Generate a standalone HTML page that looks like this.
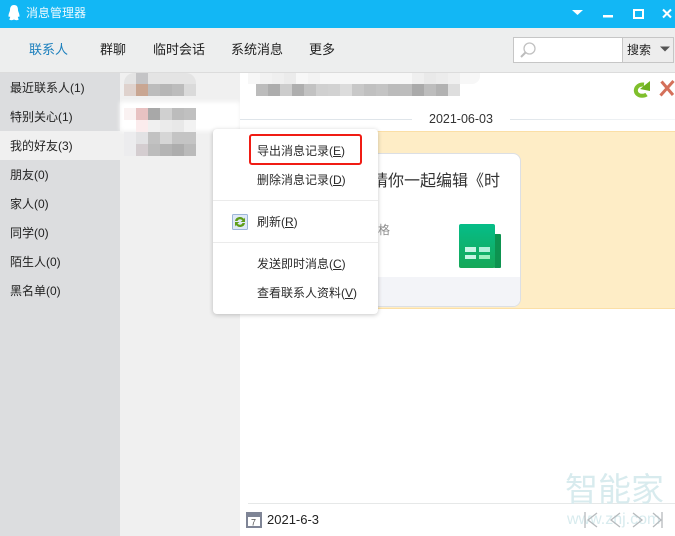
<!DOCTYPE html>
<html lang="zh">
<head>
<meta charset="utf-8">
<style>
html,body{margin:0;padding:0;}
body{width:675px;height:536px;overflow:hidden;position:relative;background:#fff;font-family:"Liberation Sans","Noto Sans CJK SC",sans-serif;font-size:13px;color:#222;}
.a{position:absolute;}
.t{position:absolute;white-space:nowrap;line-height:18px;}
.m{position:absolute;width:12px;height:12px;}
.side{position:absolute;left:10px;white-space:nowrap;line-height:18px;font-size:12px;color:#222;}
.menu{position:absolute;left:257px;white-space:nowrap;line-height:18px;font-size:12px;color:#2a2a2a;}
.menu u{text-underline-offset:1px;}
</style>
</head>
<body>
<!-- title bar -->
<div class="a" style="left:0;top:0;width:675px;height:28px;background:#12b7f5;"></div>
<svg class="a" style="left:7px;top:4px" width="14" height="18" viewBox="0 0 14 18">
<path d="M7 1C4 1 3 3.500 3 6C3 7.500 1.500 9.500 1.500 12C1.500 13 2.200 13.200 3 12.500C3.500 14 2 15 2.500 15.800C3.500 16.500 6 16.200 7 15.500C8 16.200 10.500 16.500 11.500 15.800C12 15 10.500 14 11 12.500C11.800 13.200 12.500 13 12.500 12C12.500 9.500 11 7.500 11 6C11 3 10 1 7 1Z" fill="#fff"/>
</svg>
<div class="t" style="left:26px;top:3px;color:#fff;font-size:12px;line-height:20px;opacity:.92">消息管理器</div>
<svg class="a" style="left:570px;top:7px" width="105" height="14" viewBox="0 0 105 14">
<path d="M2 3H13L7.500 8Z" fill="#fff"/>
<rect x="33" y="8" width="10" height="2.500" fill="#fff"/>
<rect x="64" y="3" width="9" height="8" fill="none" stroke="#fff" stroke-width="2"/>
<path d="M93 2.500L101 10.500M101 2.500L93 10.500" stroke="#fff" stroke-width="2" fill="none"/>
</svg>
<!-- toolbar -->
<div class="a" style="left:0;top:28px;width:675px;height:44px;background:#edeeee;border-bottom:1px solid #dcdcdc;box-sizing:content-box;"></div>
<div class="t" style="left:29px;top:41px;color:#1b7fbd;font-size:13px;">联系人</div>
<div class="t" style="left:100px;top:41px;font-size:13px;">群聊</div>
<div class="t" style="left:153px;top:41px;font-size:13px;">临时会话</div>
<div class="t" style="left:231px;top:41px;font-size:13px;">系统消息</div>
<div class="t" style="left:309px;top:41px;font-size:13px;">更多</div>
<!-- search -->
<div class="a" style="left:513px;top:37px;width:159px;height:24px;border:1px solid #c6c6c6;box-sizing:content-box;background:#fff;"></div>
<div class="a" style="left:622px;top:38px;width:50px;height:24px;background:#ededed;border-left:1px solid #c6c6c6;"></div>
<svg class="a" style="left:519px;top:41px" width="18" height="18" viewBox="0 0 18 18">
<circle cx="10.500" cy="7.500" r="5.500" fill="none" stroke="#c2c2c2" stroke-width="1.300"/>
<path d="M6.500 11.500L2 16" stroke="#bcbcbc" stroke-width="2" fill="none"/>
</svg>
<div class="t" style="left:627px;top:41px;font-size:12px;color:#222;">搜索</div>
<svg class="a" style="left:659px;top:45px" width="12" height="8" viewBox="0 0 12 8"><path d="M1 1.500H11L6 6.500Z" fill="#555"/></svg>
<!-- left sidebar -->
<div class="a" style="left:0;top:73px;width:120px;height:463px;background:#dcdddf;"></div>
<div class="a" style="left:0;top:131px;width:120px;height:29px;background:#f0f0f0;"></div>
<div class="side" style="top:79px;">最近联系人(1)</div>
<div class="side" style="top:108px;">特别关心(1)</div>
<div class="side" style="top:137px;">我的好友(3)</div>
<div class="side" style="top:166px;">朋友(0)</div>
<div class="side" style="top:195px;">家人(0)</div>
<div class="side" style="top:224px;">同学(0)</div>
<div class="side" style="top:253px;">陌生人(0)</div>
<div class="side" style="top:282px;">黑名单(0)</div>
<!-- second column -->
<div class="a" style="left:120px;top:73px;width:120px;height:463px;background:#f0f0f0;"></div>
<div class="a" style="left:120px;top:102px;width:120px;height:29px;background:#fff;filter:blur(2px);"></div>
<!-- mosaic list -->
<div class="a" style="left:124px;top:73px;width:72px;height:23px;background:#e4e4e4;border-radius:10px;"></div>
<div class="m" style="left:136px;top:73px;height:11px;background:#c4c4c6"></div>
<div class="m" style="left:124px;top:84px;background:#dfd2cd"></div>
<div class="m" style="left:136px;top:84px;background:#c9a692"></div>
<div class="m" style="left:148px;top:84px;background:#bcbcbc"></div>
<div class="m" style="left:160px;top:84px;background:#b6b6b6"></div>
<div class="m" style="left:172px;top:84px;background:#bcbcbc"></div>
<div class="m" style="left:184px;top:84px;background:#dadada"></div>
<div class="m" style="left:124px;top:108px;background:#faf2f2"></div>
<div class="m" style="left:136px;top:108px;background:#e8c2c2"></div>
<div class="m" style="left:148px;top:108px;background:#a8a8a8"></div>
<div class="m" style="left:160px;top:108px;background:#d0d0d0"></div>
<div class="m" style="left:172px;top:108px;background:#bcbcbc"></div>
<div class="m" style="left:184px;top:108px;background:#c0c0c0"></div>
<div class="m" style="left:136px;top:120px;background:#fbeced"></div>
<div class="m" style="left:148px;top:120px;background:#f0f0f0"></div>
<div class="m" style="left:160px;top:120px;background:#ebebeb"></div>
<div class="m" style="left:172px;top:120px;background:#e8e8e8"></div>
<div class="m" style="left:184px;top:120px;background:#f2f2f2"></div>
<div class="m" style="left:124px;top:132px;background:#ececee"></div>
<div class="m" style="left:136px;top:132px;background:#e2e2e4"></div>
<div class="m" style="left:148px;top:132px;background:#c2c2c2"></div>
<div class="m" style="left:160px;top:132px;background:#d6d6d6"></div>
<div class="m" style="left:172px;top:132px;background:#c4c4c4"></div>
<div class="m" style="left:184px;top:132px;background:#c4c4c4"></div>
<div class="m" style="left:124px;top:144px;background:#ececee"></div>
<div class="m" style="left:136px;top:144px;background:#d4cdd0"></div>
<div class="m" style="left:148px;top:144px;background:#bcbcbc"></div>
<div class="m" style="left:160px;top:144px;background:#b4b4b4"></div>
<div class="m" style="left:172px;top:144px;background:#adadad"></div>
<div class="m" style="left:184px;top:144px;background:#bababa"></div>
<!-- header mosaic -->
<div class="a" style="left:248px;top:73px;width:232px;height:11px;background:#f7f7f7;border-radius:0 0 8px 0;"></div>
<div class="m" style="left:260px;top:73px;height:11px;background:#f2f2f2"></div>
<div class="m" style="left:272px;top:73px;height:11px;background:#efefef"></div>
<div class="m" style="left:284px;top:73px;height:11px;background:#ebebeb"></div>
<div class="m" style="left:308px;top:73px;height:11px;background:#f3f3f3"></div>
<div class="m" style="left:412px;top:73px;height:11px;background:#efefef"></div>
<div class="m" style="left:424px;top:73px;height:11px;background:#e9e9e9"></div>
<div class="m" style="left:436px;top:73px;height:11px;background:#ececec"></div>
<div class="m" style="left:448px;top:73px;height:11px;background:#f0f0f0"></div>
<div class="m" style="left:256px;top:84px;background:#bcbcbc"></div>
<div class="m" style="left:268px;top:84px;background:#adadad"></div>
<div class="m" style="left:280px;top:84px;background:#cccccc"></div>
<div class="m" style="left:292px;top:84px;background:#aeaeae"></div>
<div class="m" style="left:304px;top:84px;background:#c2c2c2"></div>
<div class="m" style="left:316px;top:84px;background:#d0d0d0"></div>
<div class="m" style="left:328px;top:84px;background:#d2d2d2"></div>
<div class="m" style="left:340px;top:84px;background:#dcdcdc"></div>
<div class="m" style="left:352px;top:84px;background:#c8c8c8"></div>
<div class="m" style="left:364px;top:84px;background:#c0c0c0"></div>
<div class="m" style="left:376px;top:84px;background:#c4c4c4"></div>
<div class="m" style="left:388px;top:84px;background:#bbbbbb"></div>
<div class="m" style="left:400px;top:84px;background:#bdbdbd"></div>
<div class="m" style="left:412px;top:84px;background:#aaaaaa"></div>
<div class="m" style="left:424px;top:84px;background:#bdbdbd"></div>
<div class="m" style="left:436px;top:84px;background:#b2b2b2"></div>
<div class="m" style="left:448px;top:84px;background:#dedede"></div>
<!-- header icons -->
<svg class="a" style="left:633px;top:80px" width="18" height="18" viewBox="0 0 18 18">
<path d="M11 4.500C6 4 3 7 2.800 10.500C3 14 6 15.800 9 15.800C11 15.800 12.500 15.200 13.500 14.500" fill="none" stroke="#7fbf2c" stroke-width="4"/>
<path d="M17 1V11L7 9Z" fill="#6fb020"/>
</svg>
<svg class="a" style="left:659px;top:80px" width="16" height="17" viewBox="0 0 16 17">
<path d="M2.500 1.500L14 15M14.500 1L1.500 15.500" stroke="#d4705a" stroke-width="3" fill="none"/>
</svg>
<!-- date row -->
<div class="a" style="left:240px;top:119px;width:172px;height:1px;background:#dfe5ea"></div>
<div class="t" style="left:429px;top:110px;font-size:12.500px;color:#333;">2021-06-03</div>
<div class="a" style="left:510px;top:119px;width:165px;height:1px;background:linear-gradient(90deg,#dfe5ea,#f4f6f8);"></div>
<!-- yellow band -->
<div class="a" style="left:240px;top:131px;width:435px;height:178px;background:#feedc6;border-top:1px solid #fbdfa6;border-bottom:1px solid #fbdfa6;box-sizing:border-box;"></div>
<!-- card -->
<div class="a" style="left:300px;top:153px;width:221px;height:154px;background:#fff;border:1px solid #dcdfe4;border-radius:8px;box-sizing:border-box;overflow:hidden;">
  <div class="a" style="left:0;bottom:0;width:100%;height:29px;background:#f3f4f8;"></div>
</div>
<div class="t" style="left:372px;top:171px;font-size:16px;line-height:22px;color:#333;">请你一起编辑《时</div>
<div class="t" style="left:378px;top:221px;font-size:12px;color:#8d8d8d;">格</div>
<svg class="a" style="left:459px;top:224px" width="42" height="45" viewBox="0 0 42 45">
<rect x="35" y="10" width="7" height="34" rx="1" fill="#0d9350"/>
<defs><linearGradient id="g" x1="0" y1="0" x2="0" y2="1"><stop offset="0" stop-color="#05bd88"/><stop offset="1" stop-color="#16a858"/></linearGradient></defs>
<rect x="0" y="0" width="36" height="44" rx="2" fill="url(#g)"/>
<rect x="6" y="23" width="11" height="5" fill="#c8f5e6"/>
<rect x="20" y="23" width="11" height="5" fill="#b2f0da"/>
<rect x="6" y="31" width="11" height="4" fill="#c8f5e6"/>
<rect x="20" y="31" width="11" height="4" fill="#9ef0c0"/>
</svg>
<!-- context menu -->
<div class="a" style="left:213px;top:129px;width:165px;height:185px;background:#fff;border-radius:4px;box-shadow:0 1px 5px rgba(0,0,0,.22);"></div>
<div class="a" style="left:213px;top:200px;width:165px;height:1px;background:#ebebeb"></div>
<div class="a" style="left:213px;top:242px;width:165px;height:1px;background:#ebebeb"></div>
<div class="a" style="left:249px;top:134px;width:113px;height:31px;border:2px solid #f01c14;border-radius:3px;box-sizing:border-box;"></div>
<div class="menu" style="top:142px;">导出消息记录(<u>E</u>)</div>
<div class="menu" style="top:171px;">删除消息记录(<u>D</u>)</div>
<div class="menu" style="top:213px;">刷新(<u>R</u>)</div>
<div class="menu" style="top:255px;">发送即时消息(<u>C</u>)</div>
<div class="menu" style="top:284px;">查看联系人资料(<u>V</u>)</div>
<svg class="a" style="left:232px;top:214px" width="16" height="16" viewBox="0 0 16 16">
<rect x="0.500" y="0.500" width="15" height="15" rx="1" fill="#dfe9f7" stroke="#9db6d8"/>
<path d="M3 7C3.500 4 6 3 8 3C10 3 11 4 12 5L13 3.500V8H8.500L10.500 6.500C9.500 5 6.500 4.500 5.500 7Z" fill="#5f9e1a"/>
<path d="M13 9C12.500 12 10 13 8 13C6 13 5 12 4 11L3 12.500V8H7.500L5.500 9.500C6.500 11 9.500 11.500 10.500 9Z" fill="#5f9e1a"/>
</svg>
<!-- footer -->
<div class="a" style="left:248px;top:503px;width:427px;height:1px;background:#e6e8e8"></div>
<svg class="a" style="left:246px;top:511px" width="16" height="17" viewBox="0 0 16 17">
<rect x="1" y="2" width="14" height="14" fill="#fff" stroke="#7f8596" stroke-width="2"/>
<rect x="0" y="1" width="16" height="5" fill="#7f8596"/>
<text x="5" y="14.500" font-size="9" font-family="Liberation Sans" fill="#555">7</text>
</svg>
<div class="t" style="left:267px;top:511px;font-size:13px;color:#222;">2021-6-3</div>
<!-- watermark -->
<div class="t" style="left:565px;top:470px;font-size:33px;line-height:40px;color:#d8ebee;">智能家</div>
<div class="t" style="left:567px;top:509px;font-size:16px;line-height:22px;color:#d8ebee;">www.znj.com</div>
<svg class="a" style="left:584px;top:510px" width="82" height="20" viewBox="0 0 82 20">
<path d="M1 2V18M13 3L4 10L13 17M36 3L27 10L36 17M49 3L58 10L49 17M69 3L77 10L69 17M78 2V18" fill="none" stroke="#b6babd" stroke-width="1.300"/>
</svg>
</body>
</html>
